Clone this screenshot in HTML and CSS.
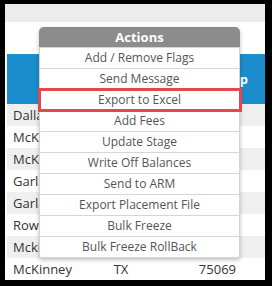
FILE: index.html
```
<!DOCTYPE html>
<html lang="en">
<head>
    <meta charset="UTF-8">
    <meta name="viewport" content="width=device-width, initial-scale=1.0">
    <title>Actions</title>
    <link rel="stylesheet" href="styles.css">
</head>
<body>
    <div class="frame">
        <div class="toolbar"></div>
        <div class="spacer"></div>

        <div class="grid">
            <div class="grid_head">
                <span class="col_city"></span>
                <span class="col_state"></span>
                <span class="col_zip">Zip</span>
            </div>
            <div class="row odd"><span class="col_city">Dallas</span><span class="col_state">TX</span><span class="col_zip">75201</span></div>
            <div class="row"><span class="col_city">McKinney</span><span class="col_state">TX</span><span class="col_zip">75070</span></div>
            <div class="row odd"><span class="col_city">McKinney</span><span class="col_state">TX</span><span class="col_zip">75071</span></div>
            <div class="row"><span class="col_city">Garland</span><span class="col_state">TX</span><span class="col_zip">75040</span></div>
            <div class="row odd"><span class="col_city">Garland</span><span class="col_state">TX</span><span class="col_zip">75043</span></div>
            <div class="row"><span class="col_city">Rowlett</span><span class="col_state">TX</span><span class="col_zip">75088</span></div>
            <div class="row odd"><span class="col_city">Mckinney</span><span class="col_state">TX</span><span class="col_zip">75069</span></div>
            <div class="row"><span class="col_city">McKinney</span><span class="col_state">TX</span><span class="col_zip">75069</span></div>
        </div>

        <!-- actions menu -->
        <div class="menu">
            <div class="menu_title">Actions</div>
            <div class="menu_item">Add / Remove Flags</div>
            <div class="menu_item">Send Message</div>
            <div class="menu_item selected">Export to Excel</div>
            <div class="menu_item">Add Fees</div>
            <div class="menu_item">Update Stage</div>
            <div class="menu_item">Write Off Balances</div>
            <div class="menu_item">Send to ARM</div>
            <div class="menu_item">Export Placement File</div>
            <div class="menu_item">Bulk Freeze</div>
            <div class="menu_item">Bulk Freeze RollBack</div>
        </div>
    </div>
</body>
</html>
```

FILE: styles.css
```
body{
    margin:0;
    background:#000;
    font-family:"Open Sans", "Noto Sans", sans-serif;
}

.frame{
    position:relative;
    margin:4px 7px 6px 5px;
    height:276px;
    background:#fff;
    overflow:hidden;
}

.toolbar{
    height:18px;
    background:#ececec;
}

.spacer{
    height:32px;
}

.grid{
    padding-left:2px;
}

.grid_head, .row{
    display:grid;
    grid-template-columns:83px 62px 1fr;
    align-items:center;
}

.grid_head{
    height:50px;
    background:#1b8dcc;
    color:#fff;
    font-weight:bold;
    font-size:13px;
}

.grid_head .col_zip{
    padding-right:17px;
}

.row{
    height:22px;
    font-size:13px;
    color:#333;
}

.row.odd{
    background:#efefef;
}

.col_city{
    padding-left:6px;
}

.col_state{
    text-align:center;
}

.col_zip{
    text-align:right;
    padding-right:29px;
}

.menu{
    position:absolute;
    left:34px;
    top:23px;
    width:199px;
    background:#fff;
    border:1px solid #d4d4d4;
    border-top:none;
    border-radius:5px 5px 2px 2px;
    box-shadow:0 2px 4px rgba(0,0,0,0.25);
}

.menu_title{
    height:20px;
    line-height:20px;
    background:#8c8c8c;
    color:#fff;
    font-weight:bold;
    font-size:13px;
    text-align:center;
    border-radius:5px 5px 0 0;
    margin:0 -1px;
}

.menu_item{
    height:20px;
    line-height:20px;
    font-size:12px;
    color:#555;
    text-align:center;
    border-top:1px solid #d6d6d6;
}

.menu_item.selected{
    position:relative;
}

.menu_item.selected::after{
    content:"";
    position:absolute;
    left:-2px;
    right:-3px;
    top:-2px;
    bottom:-2px;
    border:3px solid #e5474e;
}
```
